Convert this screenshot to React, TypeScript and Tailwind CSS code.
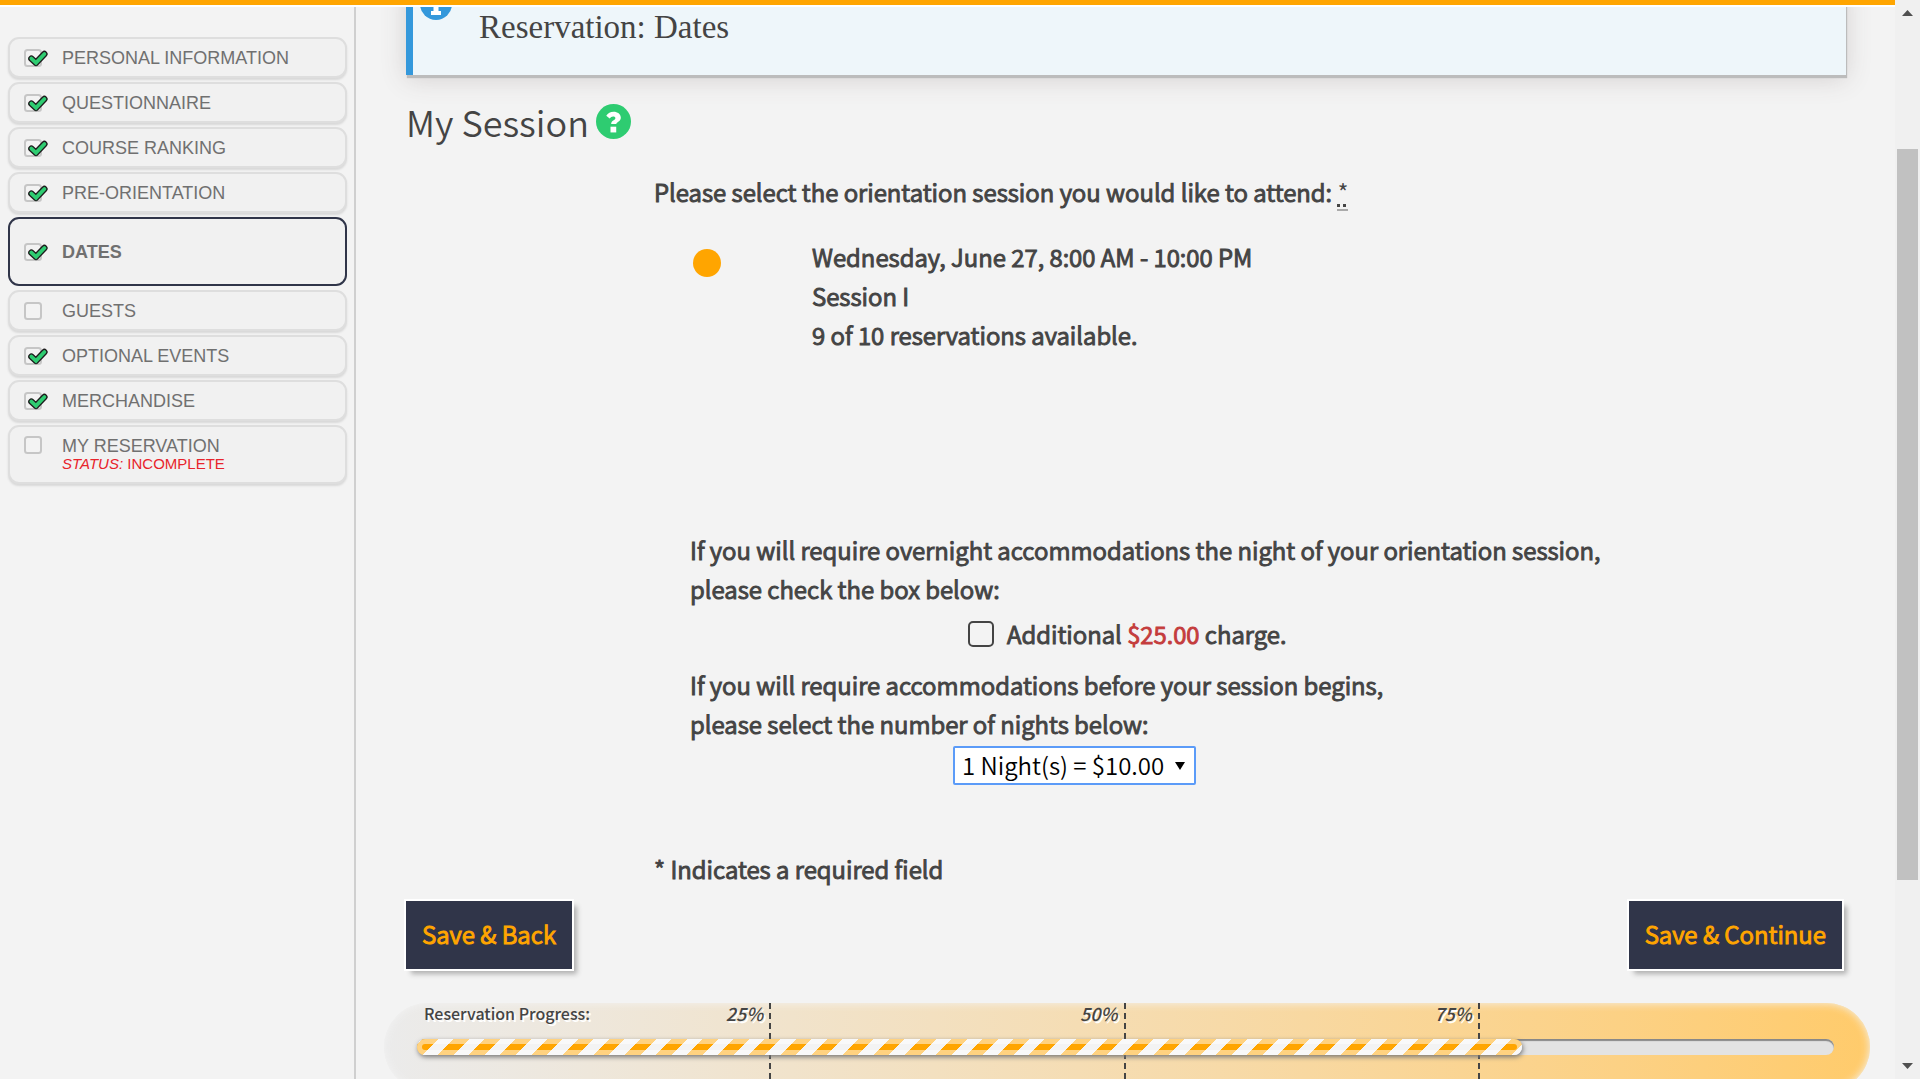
import React from "react";

type Step = { label: string; done: boolean; current?: boolean; incomplete?: boolean };

const steps: Step[] = [
  { label: "Personal Information", done: true },
  { label: "Questionnaire", done: true },
  { label: "Course Ranking", done: true },
  { label: "Pre-Orientation", done: true },
  { label: "Dates", done: true, current: true },
  { label: "Guests", done: false },
  { label: "Optional Events", done: true },
  { label: "Merchandise", done: true },
  { label: "My Reservation", done: false, incomplete: true },
];

function StepMark({ done }: { done: boolean }) {
  return (
    <svg viewBox="0 0 24 18" className="h-[18px] w-6 shrink-0" aria-hidden="true">
      <rect x="1" y="1" width="16" height="16" rx="2.5" fill="#f3f3f3" stroke="#c6c6c6" strokeWidth="2" />
      {done && (
        <>
          <path d="M7.400 9.600 12 13.800 20.400 5" fill="none" stroke="#1c1c1c" strokeWidth="6.4" strokeLinecap="round" strokeLinejoin="round" />
          <path d="M7.400 9.600 12 13.800 20.400 5" fill="none" stroke="#2ecc71" strokeWidth="3.800" strokeLinecap="round" strokeLinejoin="miter" />
        </>
      )}
    </svg>
  );
}

function StepLink({ step }: { step: Step }) {
  const box = step.current
    ? "border-[#303549] h-[69px] items-center font-bold"
    : step.incomplete
      ? "border-[#dedede] h-[59px] pt-[9px] shadow-[0_2px_2px_#d9d9d9]"
      : "border-[#dedede] h-[41px] items-center shadow-[0_2px_2px_#d9d9d9]";
  return (
    <a
      href="#"
      className={`flex rounded-[11px] border-2 bg-[#f1f1f1] pl-[14px] text-[18px] leading-[20px] uppercase text-[#707070] ${box}`}
    >
      <StepMark done={step.done} />
      <span className="ml-[14px] flex flex-col">
        {step.label}
        {step.incomplete && (
          <span className="text-[15px] leading-[16px] text-[#e8242c]">
            <i>Status:</i> Incomplete
          </span>
        )}
      </span>
    </a>
  );
}

function Marker({ label }: { label: string }) {
  return (
    <div className="flex h-full flex-1 justify-end">
      <i className="pr-[6px] text-[18px] leading-[20px] font-medium [text-shadow:2px_2px_0_#fff]">{label}</i>
      <div className="w-[2px] bg-[repeating-linear-gradient(#444_0_6px,transparent_6px_10px)]" />
    </div>
  );
}

export default function App() {
  return (
    <div className="flex h-screen overflow-hidden bg-[#f3f3f3] font-['Noto_Sans_CJK_JP',sans-serif] text-[#444]">
      <div className="flex min-w-0 flex-1 flex-col">
        <header className="h-[7px] shrink-0 border-b-2 border-white bg-[#ffa500]" />
        <div className="flex min-h-0 flex-1">
          <nav className="flex w-[356px] shrink-0 flex-col gap-1 border-r-2 border-[#cfcfcf] pt-[30px] pr-[7px] pl-2 font-['Liberation_Sans',sans-serif]">
            {steps.map((s) => (
              <StepLink key={s.label} step={s} />
            ))}
          </nav>

          <main className="min-w-0 flex-1 overflow-hidden pr-[49px] pl-[50px]">
            <section className="-mt-6 flex h-[92px] border-l-[7px] border-[#3498db] bg-[#eef6fa] pl-[7px] shadow-[1px_3px_1px_#bcbcbc,0_4px_24px_#d4d0d0]">
              <svg viewBox="0 0 32 32" className="mt-[5px] size-8" aria-hidden="true">
                <circle cx="16" cy="16" r="16" fill="#3498db" />
                <path d="M13.5 5h5v4.500h-5zM11 12h7.500v11H21v4H11v-4h2.500v-7H11z" fill="#fff" />
              </svg>
              <h2 className="mt-7 ml-[27px] font-['Liberation_Serif',serif] text-[33px] leading-[32px]">Reservation: Dates</h2>
            </section>

            <div className="mt-[21px] flex h-[50px] items-center gap-[7px]">
              <h1 className="text-[36px] leading-[50px] font-[350]">My Session</h1>
              <button type="button" aria-label="Help">
                <svg viewBox="0 0 512 512" className="size-[35px]">
                  <circle cx="256" cy="256" r="256" fill="#2ecc71" />
                  <path d="M222 293c0-52 62-54 62-87 0-15-14-24-34-24-21 0-35 11-50 29l-50-38c26-38 60-60 108-60 56 0 105 34 105 88 0 58-65 62-65 92z" fill="#fff" />
                  <path d="M212 332h84v84h-84z" fill="#fff" />
                </svg>
              </button>
            </div>

            <form className="pl-[248px] text-[24px] leading-[39px] font-[350] [-webkit-text-stroke:1px_currentColor]" onSubmit={(e) => e.preventDefault()}>
              <fieldset className="mt-[26px] h-[358px]">
                <legend className="whitespace-nowrap">
                  Please select the orientation session you would like to attend:{" "}
                  <abbr title="required" className="border-b-2 border-[#aaa] underline decoration-dotted decoration-3 underline-offset-2 [-webkit-text-stroke:0px]">*</abbr>
                </legend>
                <div className="mt-[26px] flex pl-[39px]">
                  <input id="session" type="radio" defaultChecked className="mt-3 size-7 shrink-0 appearance-none rounded-full bg-[#ffa500]" />
                  <label htmlFor="session" className="ml-[91px]">
                    Wednesday, June 27, 8:00 AM - 10:00 PM
                    <br />
                    Session I
                    <br />9 of 10 reservations available.
                  </label>
                </div>
              </fieldset>

              <div className="flex w-[908px] flex-col pl-9 whitespace-nowrap">
                <p>
                  If you will require overnight accommodations the night of your orientation session,
                  <br />
                  please check the box below:
                </p>
                <label className="mt-[6px] ml-[278px] flex items-center gap-[13px]">
                  <input type="checkbox" className="size-[26px] appearance-none rounded-[5px] border-2 border-[#444]" />
                  <span>
                    Additional <span className="text-[#c43c3c]">$25.00</span> charge.
                  </span>
                </label>
                <label htmlFor="nights" className="mt-[12px]">
                  If you will require accommodations before your session begins,
                  <br />
                  please select the number of nights below:
                </label>
                <div className="relative mt-[3px] ml-[263px] w-[243px]">
                  <select id="nights" className="block h-[39px] w-full appearance-none rounded-[2px] border-2 border-[#5b9bf8] bg-white pb-[2px] pl-[7px] text-[24px] leading-[33px] font-[350] text-black [-webkit-text-stroke:0px]">
                    <option>1 Night(s) = $10.00</option>
                  </select>
                  <svg viewBox="0 0 10 8" className="pointer-events-none absolute top-4 right-[11px] h-2 w-[10px]" aria-hidden="true">
                    <path d="M0 0h10L5 8z" fill="#000" />
                  </svg>
                </div>
              </div>
              <p className="mt-[64px]">* Indicates a required field</p>
            </form>

            <div className="mt-[13px] flex justify-between pr-1 text-[24px] font-[350] text-[#ffa500] [-webkit-text-stroke:1px_currentColor]">
              <button type="button" className="h-[68px] bg-[#303549] px-4 pb-[2px] shadow-[0_0_0_2px_#fff,5px_5px_5px_#b0b0b0]">Save &amp; Back</button>
              <button type="button" className="h-[68px] bg-[#303549] px-4 pb-[2px] shadow-[0_0_0_2px_#fff,5px_5px_5px_#b0b0b0]">Save &amp; Continue</button>
            </div>

            <section className="relative -mr-6 -ml-[22px] mt-[34px] h-[88px] rounded-full bg-linear-to-r from-[#ebebeb] to-[#ffcb6b] pr-9 pl-[33px] shadow-[inset_0_0_8px_#f3f3f3]">
              <div className="flex h-full">
                <Marker label="25%" />
                <Marker label="50%" />
                <Marker label="75%" />
                <div className="flex-1" />
              </div>
              <span className="absolute top-0 left-10 text-[16px] leading-[20px] font-medium [text-shadow:2px_2px_0_#fff]">Reservation Progress:</span>
              <div role="progressbar" aria-label="Reservation Progress" aria-valuenow={78} className="absolute top-9 right-9 left-[33px] h-4 rounded-full bg-[#e3e3e3] shadow-[inset_0_2px_1px_#888]">
                <div className="h-4 w-[78%] rounded-full bg-[repeating-linear-gradient(135deg,#f3f3f3_0_4px,#ffa500_4px_15px,#f3f3f3_15px_22px)] shadow-[inset_0_0_0_5px_rgba(255,255,255,0.5),1px_2px_5px_#777]" />
              </div>
            </section>
          </main>
        </div>
      </div>

      <div className="flex w-[25px] shrink-0 flex-col items-center bg-[#f0f0f0] py-[10px]" aria-hidden="true">
        <svg viewBox="0 0 11 6" className="h-[6px] w-[11px]"><path d="M0 6 5.500 0 11 6z" fill="#505050" /></svg>
        <div className="flex-133" />
        <div className="w-[21px] flex-731 bg-[#c1c1c1]" />
        <div className="flex-183" />
        <svg viewBox="0 0 11 6" className="h-[6px] w-[11px]"><path d="M0 0h11L5.500 6z" fill="#505050" /></svg>
      </div>
    </div>
  );
}
